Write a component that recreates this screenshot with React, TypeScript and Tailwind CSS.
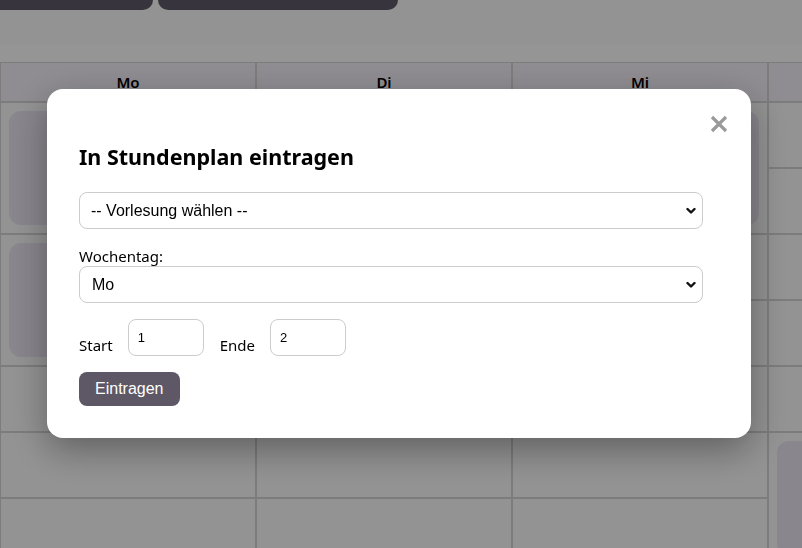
import React from "react";

const days = ["Mo", "Di", "Mi", "Do", "Fr"];

type Cell = { span?: number; card?: boolean } | null;

// null = covered by a rowspan above
const grid: Cell[][] = [
  [{ span: 2, card: true }, {}, { span: 2, card: true }, {}, {}],
  [null, {}, null, {}, {}],
  [{ span: 2, card: true }, {}, {}, {}, {}],
  [null, {}, {}, {}, {}],
  [{}, {}, {}, {}, {}],
  [{}, {}, {}, { span: 2, card: true }, {}],
  [{}, {}, {}, null, {}],
];

function Chevron() {
  return (
    <svg width="10" height="7" viewBox="0 0 10 7" className="pointer-events-none absolute right-[7px] top-1/2 -translate-y-1/2">
      <polyline points="1.5,1.5 5,5 8.5,1.5" fill="none" stroke="#111" strokeWidth="2.4" strokeLinecap="round" strokeLinejoin="round" />
    </svg>
  );
}

export default function App() {
  return (
    <div className="relative h-[548px] w-[802px] overflow-hidden bg-[#f5f5f5] font-['Noto_Sans',sans-serif] text-black">
      {/* top action buttons, scrolled mostly out of view */}
      <div className="flex h-[10px] items-end gap-[5px] overflow-hidden">
        <button className="-ml-[10px] h-[40px] w-[163px] shrink-0 rounded-[10px] bg-[#5e5866]" />
        <button className="h-[40px] w-[240px] shrink-0 rounded-[10px] bg-[#5e5866]" />
      </div>
      <div className="mt-[35px] h-[17px] bg-[#f8f8f8]" />

      <table className="w-[1280px] table-fixed border-separate border-spacing-0">
        <thead>
          <tr>
            {days.map((d) => (
              <th key={d} className="h-[40px] border border-[#cfcfcf] bg-[#eeebf2] text-[15px] font-semibold">
                {d}
              </th>
            ))}
          </tr>
        </thead>
        <tbody>
          {grid.map((row, r) => (
            <tr key={r}>
              {row.map((cell, c) =>
                cell === null ? null : (
                  <td
                    key={c}
                    rowSpan={cell.span ?? 1}
                    className="h-[66px] border border-[#cfcfcf] p-2 align-top"
                  >
                    {cell.card && <div className="h-[114px] rounded-[12px] bg-[#e5dfec]" />}
                  </td>
                ),
              )}
            </tr>
          ))}
        </tbody>
      </table>

      {/* modal */}
      <div className="fixed inset-0 flex items-start bg-black/40 pl-[47px] pt-[89px]">
        <div className="relative w-[704px] rounded-[16px] bg-white pb-8 pl-8 pt-[55px] shadow-[0_12px_36px_rgba(0,0,0,0.35)]">
          <button className="absolute right-[23px] top-[26px]">
            <svg width="18" height="18" viewBox="0 0 18 18">
              <path d="M2 2 L16 16 M16 2 L2 16" stroke="#9a9a9a" strokeWidth="3.2" />
            </svg>
          </button>

          <h2 className="text-[21.5px] font-bold leading-[26px]">In Stundenplan eintragen</h2>

          <div className="relative mt-[22px] w-[624px]">
            <select className="h-[37px] w-full appearance-none rounded-[8px] border border-[#cccccc] bg-white pl-[11px] font-['Liberation_Sans',Arial,sans-serif] text-[16px] text-black">
              <option>-- Vorlesung wählen --</option>
            </select>
            <Chevron />
          </div>

          <label className="mt-[17px] block text-[15px] leading-[20px]">Wochentag:</label>
          <div className="relative w-[624px]">
            <select className="h-[37px] w-full appearance-none rounded-[8px] border border-[#cccccc] bg-white pl-[12px] font-['Liberation_Sans',Arial,sans-serif] text-[16px] text-black">
              <option>Mo</option>
            </select>
            <Chevron />
          </div>

          <div className="mt-[16px] flex items-end text-[15px]">
            <span className="pb-[1px] leading-[20px]">Start</span>
            <input
              defaultValue="1"
              className="ml-[15px] h-[37px] w-[76px] rounded-[8px] border border-[#cccccc] px-[9px] font-['Liberation_Sans',Arial,sans-serif] text-[13px]"
            />
            <span className="ml-[16px] pb-[1px] leading-[20px]">Ende</span>
            <input
              defaultValue="2"
              className="ml-[15px] h-[37px] w-[76px] rounded-[8px] border border-[#cccccc] px-[9px] font-['Liberation_Sans',Arial,sans-serif] text-[13px]"
            />
          </div>

          <button className="mt-[16px] h-[34px] rounded-[8px] bg-[#5e5866] px-4 font-['Liberation_Sans',Arial,sans-serif] text-[16px] text-white">
            Eintragen
          </button>
        </div>
      </div>
    </div>
  );
}
